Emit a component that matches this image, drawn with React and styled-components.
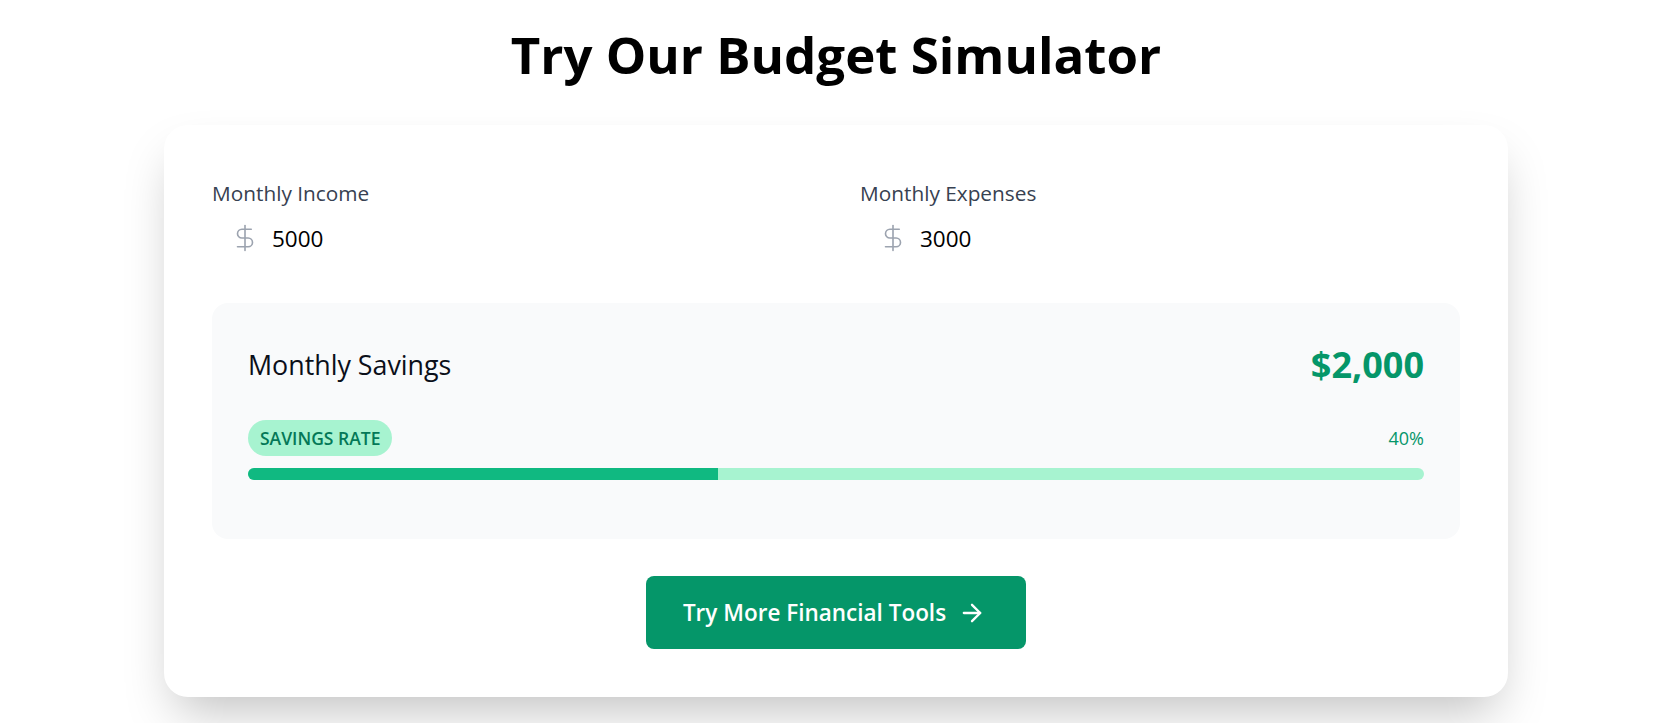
import { useState } from "react";
import styled, { createGlobalStyle } from "styled-components";
import { DollarSign, ArrowRight } from "lucide-react";

const GlobalStyle = createGlobalStyle`
    body {
        margin: 0;
        background: #ffffff;
        font-family: "Open Sans", "Noto Sans", Arial, sans-serif;
        color: #111827;
    }
    * {
        box-sizing: border-box;
    }
`

const Page = styled.div`
    padding: 22px 0 60px 4px;
`

const Title = styled.h2`
    margin: 0 0 38px;
    text-align: center;
    font-size: 51px;
    line-height: 65px;
    font-weight: 700;
    color: #000;
`

const Card = styled.div`
    width: 1344px;
    margin: 0 auto;
    padding: 48px;
    background: #fff;
    border-radius: 24px;
    box-shadow: 0 25px 50px -12px rgba(0, 0, 0, 0.25);
`

const Inputs = styled.div`
    display: grid;
    grid-template-columns: 1fr 1fr;
    gap: 48px;
    margin-bottom: 40px;
`

const Field = styled.div`
    display: flex;
    flex-direction: column;
`

const Label = styled.label`
    font-size: 20.8px;
    line-height: 40px;
    font-weight: 500;
    color: #374151;
`

const InputWrap = styled.div`
    position: relative;
    height: 50px;

    svg {
        position: absolute;
        left: 18px;
        top: 50%;
        transform: translateY(-50%);
        color: #9ca3af;
    }
`

const Input = styled.input`
    width: 100%;
    height: 100%;
    padding: 0 0 0 60px;
    border: none;
    outline: none;
    background: transparent;
    font-family: inherit;
    font-size: 22.5px;
    color: #000;
`

const Panel = styled.div`
    background: #f9fafb;
    border-radius: 16px;
    padding: 36px 36px 59px;
`

const Row = styled.div`
    display: flex;
    align-items: center;
    justify-content: space-between;
`

const SavingsLabel = styled.div`
    font-size: 26.8px;
    line-height: 52px;
    font-weight: 500;
    color: #0b0f19;
`

const SavingsValue = styled.div`
    font-size: 36px;
    line-height: 52px;
    font-weight: 700;
    color: #059669;
`

const RateRow = styled(Row)`
    margin-top: 29px;
`

const Pill = styled.span`
    display: inline-flex;
    align-items: center;
    height: 36px;
    padding: 0 12px;
    border-radius: 9999px;
    background: #a7f3d0;
    color: #047857;
    font-size: 17.5px;
    font-weight: 600;
    text-transform: uppercase;
`

const Percent = styled.span`
    font-size: 18px;
    font-weight: 500;
    color: #059669;
`

const Track = styled.div`
    margin-top: 12px;
    height: 12px;
    border-radius: 9999px;
    background: #a7f3d0;
    overflow: hidden;
`

const Fill = styled.div`
    height: 100%;
    background: #10b981;
`

const Actions = styled.div`
    display: flex;
    justify-content: center;
    margin-top: 37px;
`

const Button = styled.button`
    display: inline-flex;
    align-items: center;
    gap: 12px;
    height: 73px;
    padding: 0 40px 0 37px;
    border: none;
    border-radius: 8px;
    background: #059669;
    color: #fff;
    font-family: inherit;
    font-size: 22.5px;
    font-weight: 600;
    cursor: pointer;
`

const App = () => {
    const [income, setIncome] = useState(5000);
    const [expenses, setExpenses] = useState(3000);

    const savings = income - expenses;
    const rate = income > 0 ? Math.max(0, Math.min(100, Math.round((savings / income) * 100))) : 0;

    return (
        <Page>
            <GlobalStyle />
            <Title>Try Our Budget Simulator</Title>
            <Card>
                <Inputs>
                    <Field>
                        <Label>Monthly Income</Label>
                        <InputWrap>
                            <DollarSign size={30} strokeWidth={1.3} />
                            <Input type="number" value={income} onChange={e => setIncome(Number(e.target.value))} />
                        </InputWrap>
                    </Field>
                    <Field>
                        <Label>Monthly Expenses</Label>
                        <InputWrap>
                            <DollarSign size={30} strokeWidth={1.3} />
                            <Input type="number" value={expenses} onChange={e => setExpenses(Number(e.target.value))} />
                        </InputWrap>
                    </Field>
                </Inputs>
                <Panel>
                    <Row>
                        <SavingsLabel>Monthly Savings</SavingsLabel>
                        <SavingsValue>${savings.toLocaleString("en-US")}</SavingsValue>
                    </Row>
                    <RateRow>
                        <Pill>Savings Rate</Pill>
                        <Percent>{rate}%</Percent>
                    </RateRow>
                    <Track>
                        <Fill style={{ width: `${rate}%` }} />
                    </Track>
                </Panel>
                <Actions>
                    <Button>
                        Try More Financial Tools
                        <ArrowRight size={28} strokeWidth={2} />
                    </Button>
                </Actions>
            </Card>
        </Page>
    );
}

export default App;
